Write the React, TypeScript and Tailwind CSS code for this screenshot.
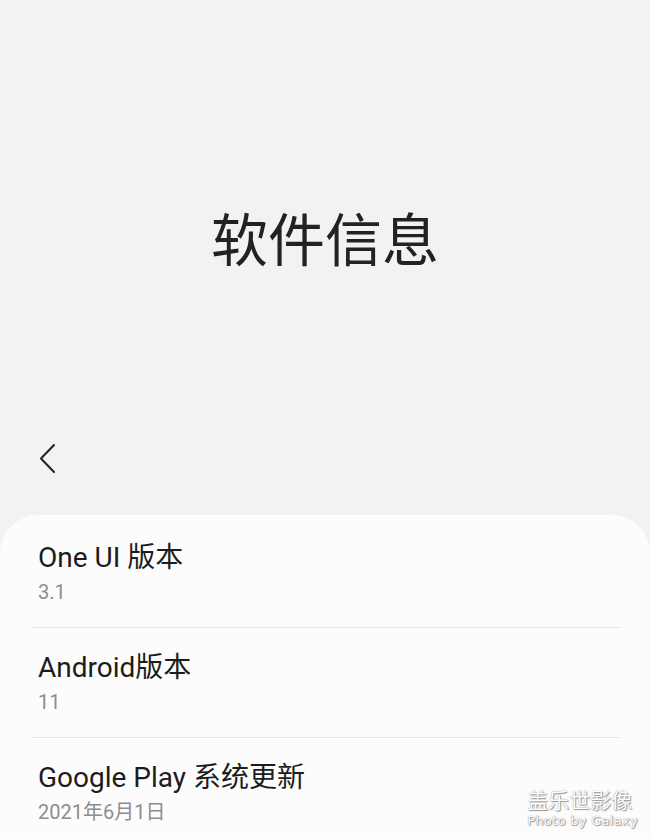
import type { FC } from "react";

type InfoRow = { title: string; value: string };

const rows: InfoRow[] = [
  { title: "One UI 版本", value: "3.1" },
  { title: "Android版本", value: "11" },
  { title: "Google Play 系统更新", value: "2021年6月1日" },
];

const font = "font-['Roboto','Noto_Sans_CJK_SC',sans-serif]";

const BackIcon: FC = () => (
  <svg width="20" height="32" viewBox="0 0 20 32" fill="none">
    <polyline
      points="16,2 3,15.5 16,29"
      stroke="#222222"
      strokeWidth="2"
      strokeLinecap="round"
      strokeLinejoin="round"
    />
  </svg>
);

const Row: FC<{ row: InfoRow; last: boolean }> = ({ row, last }) => (
  <div className={`pl-[7px] py-[22px] ${last ? "" : "border-b border-[#e3e3e3]"}`}>
    <p className="text-[28px] leading-[36px] text-[#1c1c1c]">{row.title}</p>
    <p className="mt-[3px] text-[20px] leading-[26px] text-[#8d8d8d]">{row.value}</p>
  </div>
);

export default function App() {
  return (
    <div className={`relative flex h-[839px] w-full flex-col overflow-hidden bg-[#f2f2f2] ${font}`}>
      <header className="flex h-[430px] shrink-0 items-center justify-center pt-[52px]">
        <h1 className="text-[57px] leading-none font-normal text-[#222222]">软件信息</h1>
      </header>

      <div className="h-[85px] shrink-0 pl-[38px] pt-[13px]">
        <BackIcon />
      </div>

      <section className="shrink-0 rounded-t-[38px] bg-[#fcfcfc] pt-[3px] pl-[31px] pr-[30px]">
        {rows.map((row, i) => (
          <Row key={row.title} row={row} last={i === rows.length - 1} />
        ))}
      </section>

      <div className="absolute right-[12px] bottom-[11px] text-white [text-shadow:0_0_1px_#777,1px_1px_1px_#999]">
        <p className="text-[21px] leading-[23px]">盖乐世影像</p>
        <p className="font-['DejaVu_Sans',sans-serif] text-[13px] leading-[15px] tracking-[0.3px]">Photo by Galaxy</p>
      </div>
    </div>
  );
}
